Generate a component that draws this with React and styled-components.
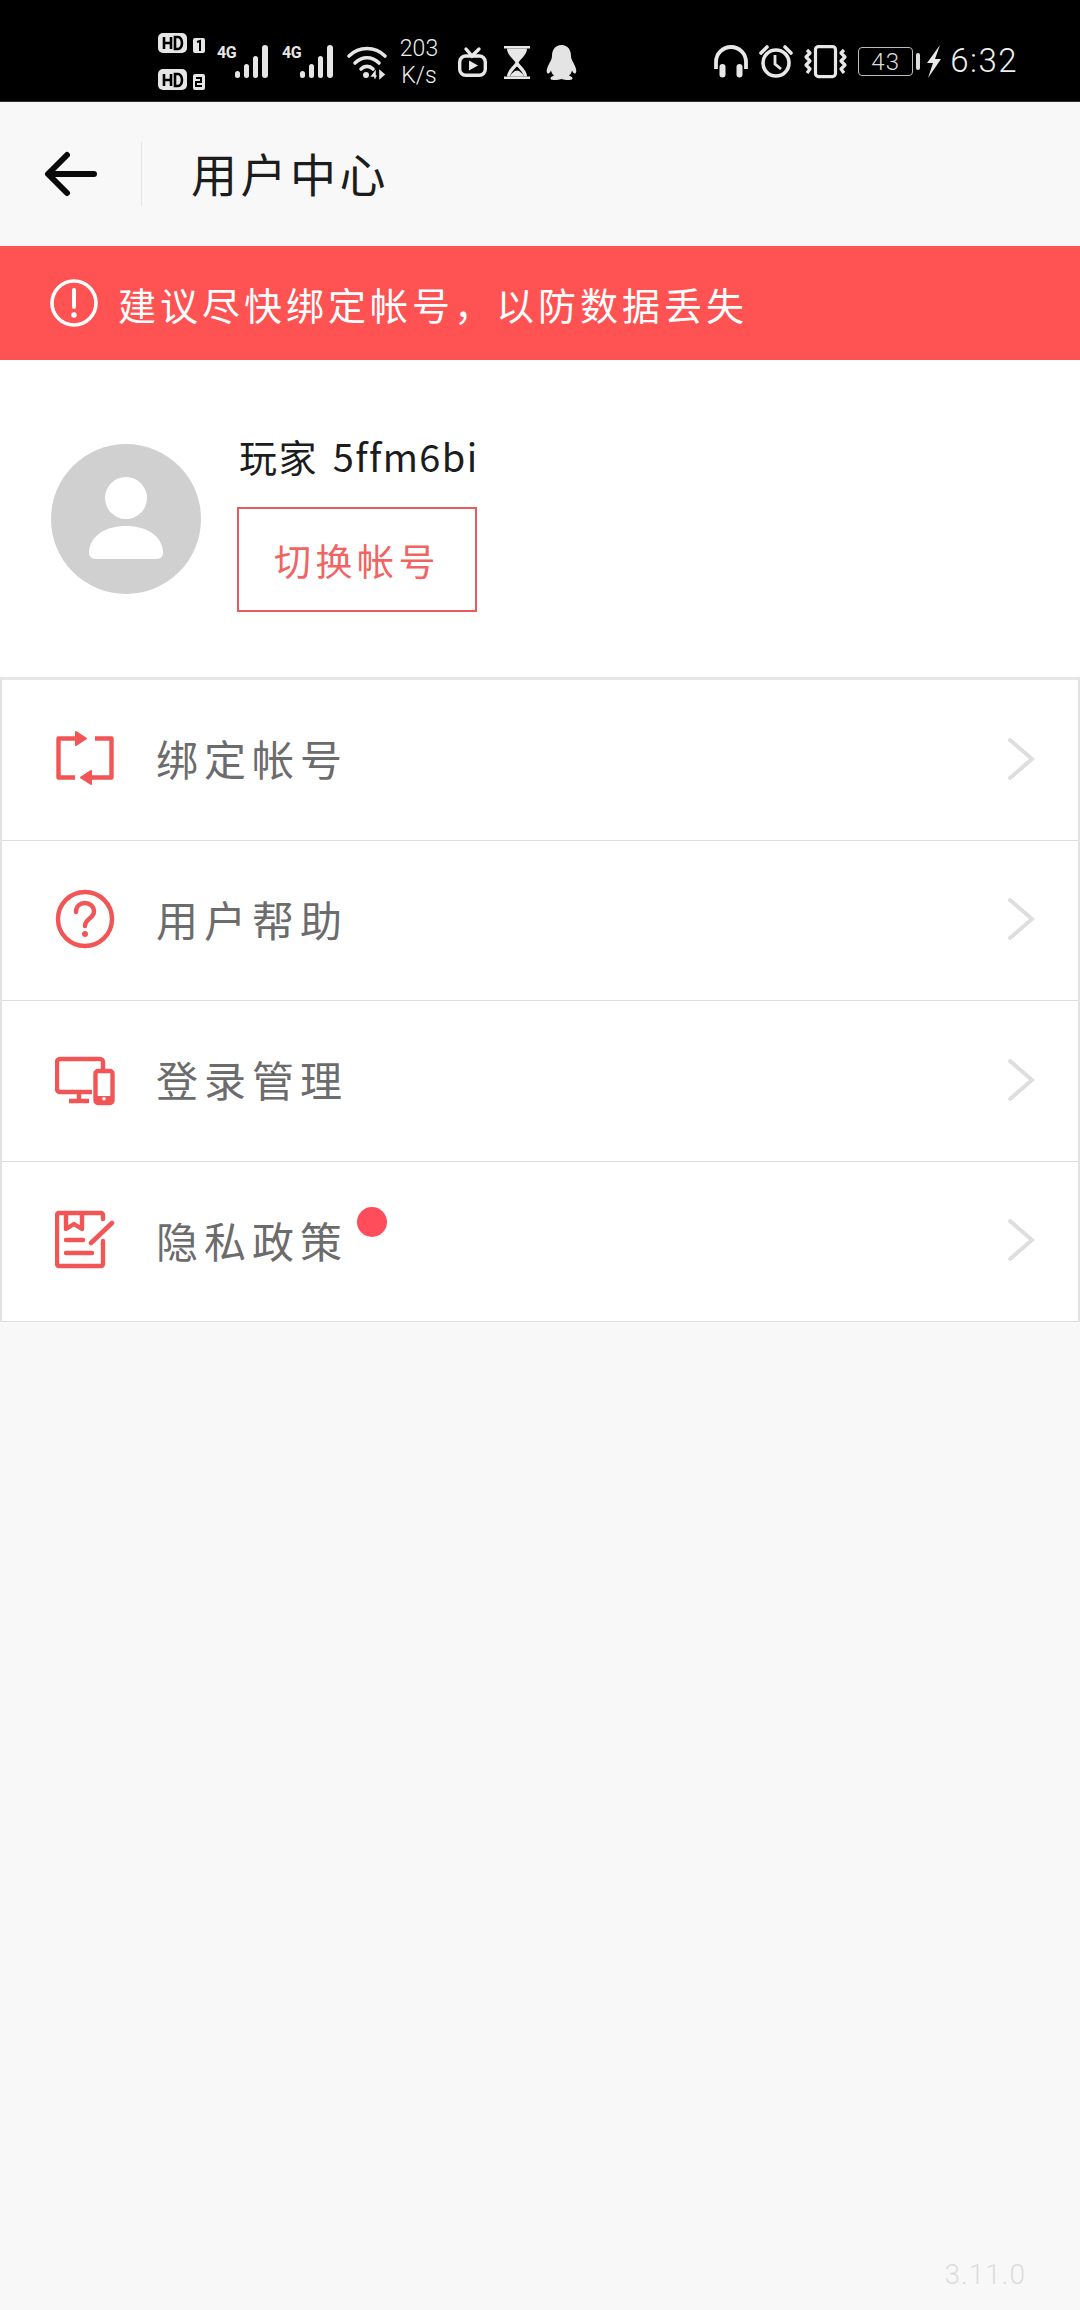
import styled, { createGlobalStyle } from "styled-components";

const CJK = `"Noto Sans CJK SC", "Noto Sans", sans-serif`;
const RED = "#f25555";

const GlobalStyle = createGlobalStyle`
  html, body {
    margin: 0;
    padding: 0;
    background: #f8f8f8;
  }
  * {
    box-sizing: border-box;
  }
`;

const Page = styled.div`
  width: 1080px;
  height: 2310px;
  display: flex;
  flex-direction: column;
  background: #f8f8f8;
  font-family: ${CJK};
`;

const StatusBar = styled.div`
  height: 102px;
  flex: none;
  background: #000;
  color: #e8e8e8;
  display: flex;
  justify-content: space-between;
  padding: 33px 62px 0 158px;
  border-bottom: 1px solid #333;
`;

const StatusGroup = styled.div`
  display: flex;
  align-items: flex-start;
  gap: ${(p) => p.$gap}px;
`;

const Glyph = styled.svg`
  display: block;
  flex: none;
  overflow: visible;
  margin-top: ${(p) => p.$top || 0}px;
  margin-left: ${(p) => p.$left || 0}px;
`;

const SignalWrap = styled.div`
  position: relative;
  width: 53px;
  height: 34px;
  margin-top: 12px;
`;

const NetworkType = styled.span`
  position: absolute;
  left: 0;
  top: -3px;
  font-family: "Roboto", sans-serif;
  font-weight: 700;
  font-size: 16px;
  line-height: 22px;
  letter-spacing: -0.5px;
  color: #e6e6e6;
`;

const Speed = styled.div`
  width: 42px;
  margin-left: -1px;
  font-family: "Roboto", sans-serif;
  font-weight: 300;
  font-size: 23px;
  line-height: 27px;
  text-align: center;
  color: #eee;
  margin-top: 2px;
`;

const Clock = styled.div`
  font-family: "Roboto", sans-serif;
  font-weight: 300;
  font-size: 33px;
  line-height: 40px;
  letter-spacing: 1.5px;
  color: #eee;
  margin-top: 8px;
  margin-left: -3px;
`;

const BatteryBox = styled.div`
  width: 55px;
  height: 29px;
  margin-top: 14px;
  border: 1.5px solid #bbb;
  border-radius: 4px;
  display: flex;
  align-items: center;
  justify-content: center;
  font-family: "Roboto", sans-serif;
  font-weight: 300;
  font-size: 24px;
  color: #ddd;
  letter-spacing: 1px;
`;

const TopBar = styled.header`
  height: 144px;
  flex: none;
  display: flex;
  align-items: center;
  padding-left: 44px;
`;

const Divider = styled.div`
  width: 1px;
  height: 64px;
  background: #e4e4e4;
  margin: 0 49px 0 44px;
`;

const Title = styled.h1`
  margin: 0 0 5px;
  font-size: 46px;
  font-weight: 400;
  letter-spacing: 3.5px;
  color: #1c1c1c;
`;

const Notice = styled.div`
  height: 114px;
  flex: none;
  background: #ff5252;
  display: flex;
  align-items: center;
  padding-left: 50px;
  gap: 20px;
  color: #fff;
  font-size: 38px;
  font-weight: 400;
  letter-spacing: 4px;
`;

const Profile = styled.section`
  height: 317px;
  flex: none;
  background: #fff;
  display: flex;
  padding: 84px 0 0 51px;
  gap: 36px;
`;

const Avatar = styled.div`
  width: 150px;
  height: 150px;
  border-radius: 50%;
  background: #d0d0d0;
  display: flex;
  align-items: center;
  justify-content: center;
`;

const ProfileInfo = styled.div`
  display: flex;
  flex-direction: column;
  margin-top: -15px;
`;

const PlayerName = styled.div`
  font-size: 38px;
  line-height: 54px;
  height: 78px;
  padding-left: 2px;
  font-weight: 400;
  letter-spacing: 1.4px;
  word-spacing: 5px;
  color: #1c1c1c;
  white-space: nowrap;
`;

const SwitchButton = styled.button`
  width: 240px;
  height: 105px;
  padding: 0;
  background: #fff;
  border: 2px solid #ea5a5a;
  border-radius: 0;
  color: #f06464;
  font-family: ${CJK};
  font-size: 37px;
  font-weight: 400;
  letter-spacing: 4.5px;
`;

const Menu = styled.nav`
  flex: none;
  background: #fff;
  border-top: 3px solid #e6e6e6;
  border-left: 2px solid #e2e2e2;
  border-right: 2px solid #e2e2e2;
`;

const MenuRow = styled.div`
  height: 160.5px;
  display: flex;
  align-items: center;
  padding: 0 43px 0 53px;
  border-bottom: 1.5px solid #dedede;
`;

const MenuIcon = styled.div`
  width: 60px;
  height: 60px;
  flex: none;
  margin-right: 41px;
  margin-bottom: 2px;
`;

const MenuLabel = styled.div`
  position: relative;
  margin-bottom: 4px;
  font-size: 42px;
  font-weight: 400;
  letter-spacing: 6px;
  color: #6c6c6c;
`;

const RedDot = styled.span`
  position: absolute;
  width: 30px;
  height: 30px;
  right: -39px;
  top: -2px;
  border-radius: 50%;
  background: #ff4d5c;
`;

const Chevron = styled.svg`
  display: block;
  margin-left: auto;
  margin-bottom: 2px;
`;

const Spacer = styled.div`
  flex: 1;
`;

const Version = styled.div`
  height: 60px;
  flex: none;
  padding: 8px 54px 0 0;
  text-align: right;
  font-family: "Roboto", sans-serif;
  font-weight: 300;
  font-size: 28px;
  letter-spacing: 1px;
  color: #dcdcdc;
`;

const HdBadges = () => (
  <Glyph width="47" height="57" viewBox="0 0 47 57" fill="#e6e6e6">
    <rect x="0" y="0" width="29" height="20" rx="5" />
    <rect x="35" y="5" width="12" height="15" rx="2" />
    <rect x="0" y="36" width="29" height="21" rx="5" />
    <rect x="35" y="41" width="12" height="16" rx="2" />
    <g stroke="#000" strokeWidth="2.6" fill="none">
      <path d="M6 4v12M6 10h7M13 4v12M17 4v12h3a4 6 0 0 0 0-12z" />
      <path d="M6 41v12M6 47h7M13 41v12M17 41v12h3a4 6 0 0 0 0-12z" />
      <path d="M39 9l3-1v10" strokeWidth="2" />
      <path d="M38 45h5v4h-5v4h6" strokeWidth="2" />
    </g>
  </Glyph>
);

const Signal = () => (
  <SignalWrap>
    <NetworkType>4G</NetworkType>
    <Glyph width="53" height="34" viewBox="0 0 53 34" fill="#e6e6e6">
      <rect x="18" y="26" width="5" height="7" rx="2.5" />
      <rect x="27" y="19" width="5" height="14" rx="2.5" />
      <rect x="36" y="11" width="5" height="22" rx="2.5" />
      <rect x="45" y="0" width="6" height="33" rx="3" />
    </Glyph>
  </SignalWrap>
);

const Wifi = () => (
  <Glyph width="40" height="34" viewBox="0 0 40 34" $top={12} fill="none" stroke="#e6e6e6" strokeWidth="3.6" strokeLinecap="round">
    <path d="M2 11c10-10 26-10 36 0" />
    <path d="M8 18c7-7 17-7 24 0" />
    <path d="M14 24c3.5-3.5 8.5-3.5 12 0" />
    <circle cx="19" cy="30" r="3" fill="#e6e6e6" stroke="none" />
    <path d="M28 33v-6l-3 4h4M33 26v7l4-3.5z" strokeWidth="1.6" fill="#e6e6e6" />
  </Glyph>
);

const TvIcon = () => (
  <Glyph width="29" height="29" viewBox="0 0 29 29" $top={15} $left={6} fill="none" stroke="#e8e8e8" strokeWidth="3.4">
    <rect x="1.7" y="8" width="25.6" height="19.3" rx="6" />
    <path d="M8 1l6 7 7-7" strokeLinecap="round" />
    <path d="M11 12.5v10l9-5z" fill="#e8e8e8" stroke="none" />
  </Glyph>
);

const Hourglass = () => (
  <Glyph width="26" height="33" viewBox="0 0 26 33" $top={13} $left={5} fill="#e8e8e8">
    <rect x="0" y="0" width="26" height="2.5" />
    <rect x="0" y="30.5" width="26" height="2.5" />
    <path d="M3 2.5h20c0 6-6 10-8.5 14 2.5 4 8.5 8 8.5 14h-3c-1-4-5-8-7-10-2 2-6 6-7 10H3c0-6 6-10 8.5-14C9 12.5 3 8.5 3 2.5z" />
    <path d="M6 30.5c1-3 5-6 7-6s6 3 7 6z" />
  </Glyph>
);

const Penguin = () => (
  <Glyph width="31" height="35" viewBox="0 0 31 35" $top={12} $left={4} fill="#e4e4e4">
    <path d="M15.5 0C9 0 6 5 6 11c0 3-1.5 5-3.5 9C.5 24 0 28 2 28.5c1 .2 2-1 3-3 .5 2 1.5 4 3 5-2 1-3.5 1.5-3.5 3 0 1.5 3 1.5 6 1.5 2.5 0 4-1 5-1s2.5 1 5 1c3 0 6 0 6-1.5s-1.5-2-3.5-3c1.5-1 2.5-3 3-5 1 2 2 3.2 3 3 2-.5 1.5-4.5-.5-8.5-2-4-3.5-6-3.5-9C25 5 22 0 15.5 0z" />
  </Glyph>
);

const Headphones = () => (
  <Glyph width="34" height="33" viewBox="0 0 34 33" $top={12} fill="none" stroke="#e8e8e8" strokeWidth="3.8">
    <path d="M2 24V17a15 15 0 0 1 30 0v7" />
    <rect x="5.5" y="19" width="6" height="13.5" rx="3" fill="#e8e8e8" stroke="none" />
    <rect x="22.5" y="19" width="6" height="13.5" rx="3" fill="#e8e8e8" stroke="none" />
  </Glyph>
);

const AlarmClock = () => (
  <Glyph width="34" height="33" viewBox="0 0 34 33" $top={12} fill="none" stroke="#e8e8e8" strokeWidth="3.6">
    <circle cx="17" cy="18" r="13" />
    <path d="M16 10v9l6 5" strokeWidth="2.8" />
    <path d="M2 8l6-6M32 8l-6-6" strokeLinecap="round" />
  </Glyph>
);

const Vibrate = () => (
  <Glyph width="43" height="33" viewBox="0 0 43 33" $top={12} fill="none" stroke="#e8e8e8" strokeWidth="3.2">
    <rect x="11.5" y="1.6" width="20" height="30" rx="3" />
    <path d="M3 5l3 3-4 4 4 4-4 4 4 4-3 4" strokeLinejoin="round" />
    <path d="M40 5l-3 3 4 4-4 4 4 4-4 4 3 4" strokeLinejoin="round" />
  </Glyph>
);

const BatteryTip = () => (
  <Glyph width="5" height="17" viewBox="0 0 5 17" $top={20} $left={-8} fill="#ddd">
    <rect width="4" height="17" rx="2" />
  </Glyph>
);

const Bolt = () => (
  <Glyph width="16" height="33" viewBox="0 0 16 33" $top={12} $left={-6} fill="#e8e8e8">
    <path d="M14 0L1 18h6L2 33l13-19H9z" />
  </Glyph>
);

const SwapIcon = () => (
  <svg width="60" height="60" viewBox="0 0 60 60" fill="none" stroke={RED} strokeWidth="4.4" strokeLinejoin="round">
    <path d="M20 9.5H3.5v39H20" />
    <path d="M40 9.5h16.5v39H37" />
    <path d="M21 3l10 6.5-10 6.5z" fill={RED} strokeWidth="2" />
    <path d="M36 42l-10 6.5L36 55z" fill={RED} strokeWidth="2" />
  </svg>
);

const HelpIcon = () => (
  <svg width="60" height="60" viewBox="0 0 60 60" fill="none" stroke={RED} strokeWidth="4.4" strokeLinecap="round">
    <circle cx="30" cy="30" r="27" />
    <path d="M21 23c0-6 4-9 9-9s9 3.5 9 8.5c0 7-9 7-9 14.5" />
    <circle cx="30" cy="45" r="3" fill={RED} stroke="none" />
  </svg>
);

const DevicesIcon = () => (
  <svg width="60" height="60" viewBox="0 0 60 60" fill="none" stroke={RED} strokeWidth="4.4" strokeLinejoin="round">
    <path d="M48 21v-9a3 3 0 0 0-3-3H5a3 3 0 0 0-3 3v27a3 3 0 0 0 3 3h32" />
    <path d="M24 42v7M14 51h20" />
    <rect x="40.5" y="21" width="17" height="32" rx="2.5" />
    <path d="M41 46h16v5.5H41z" fill={RED} stroke="none" />
    <circle cx="49" cy="48.8" r="1.8" fill="#fff" stroke="none" />
  </svg>
);

const PolicyIcon = () => (
  <svg width="60" height="60" viewBox="0 0 60 60" fill="none" stroke={RED} strokeWidth="4.4" strokeLinecap="round" strokeLinejoin="round">
    <path d="M48 31v23a2 2 0 0 1-2 2H4a2 2 0 0 1-2-2V5a2 2 0 0 1 2-2h42a2 2 0 0 1 2 2v4" />
    <path d="M11 4v15l8-5 8 5V4" />
    <path d="M11 30h17M11 43h26" />
    <path d="M36 33l21-20" strokeWidth="4.6" />
  </svg>
);

const menuItems = [
  { label: "绑定帐号", Icon: SwapIcon },
  { label: "用户帮助", Icon: HelpIcon },
  { label: "登录管理", Icon: DevicesIcon },
  { label: "隐私政策", Icon: PolicyIcon, unread: true },
];

const App = () => {
  return (
    <Page>
      <GlobalStyle />
      <StatusBar>
        <StatusGroup $gap={12}>
          <HdBadges />
          <Signal />
          <Signal />
          <Wifi />
          <Speed>
            203
            <br />
            K/s
          </Speed>
          <TvIcon />
          <Hourglass />
          <Penguin />
        </StatusGroup>
        <StatusGroup $gap={11}>
          <Headphones />
          <AlarmClock />
          <Vibrate />
          <BatteryBox>43</BatteryBox>
          <BatteryTip />
          <Bolt />
          <Clock>6:32</Clock>
        </StatusGroup>
      </StatusBar>

      <TopBar>
        <svg width="53" height="46" viewBox="0 0 53 46" fill="none" stroke="#0a0a0a" strokeWidth="6" strokeLinecap="round" strokeLinejoin="round">
          <path d="M50 23H5M23 4L4 23l19 19" />
        </svg>
        <Divider />
        <Title>用户中心</Title>
      </TopBar>

      <Notice>
        <svg width="48" height="48" viewBox="0 0 48 48" fill="none" stroke="#fff" strokeWidth="3.6">
          <circle cx="24" cy="24" r="22" />
          <path d="M24 11v17" strokeWidth="4" strokeLinecap="round" />
          <circle cx="24" cy="36" r="2.8" fill="#fff" stroke="none" />
        </svg>
        <span>{"建议尽快绑定帐号\uFF0C以防数据丢失"}</span>
      </Notice>

      <Profile>
        <Avatar>
          <svg width="76" height="84" viewBox="0 0 76 84" fill="#fff">
            <circle cx="38" cy="21" r="21" />
            <path d="M1 74C3 58 18 49 38 49s35 9 37 25c.5 5-2 8-7 8H8c-5 0-7.5-3-7-8z" />
          </svg>
        </Avatar>
        <ProfileInfo>
          <PlayerName>玩家 5ffm6bi</PlayerName>
          <SwitchButton>切换帐号</SwitchButton>
        </ProfileInfo>
      </Profile>

      <Menu>
        {menuItems.map(({ label, Icon, unread }) => (
          <MenuRow key={label}>
            <MenuIcon>
              <Icon />
            </MenuIcon>
            <MenuLabel>
              {label}
              {unread && <RedDot />}
            </MenuLabel>
            <Chevron width="28" height="44" viewBox="0 0 28 44" fill="none" stroke="#dedede" strokeWidth="4" strokeLinecap="round">
              <path d="M3 3l22 19L3 41" />
            </Chevron>
          </MenuRow>
        ))}
      </Menu>

      <Spacer />
      <Version>3.11.0</Version>
    </Page>
  );
};

export default App;
